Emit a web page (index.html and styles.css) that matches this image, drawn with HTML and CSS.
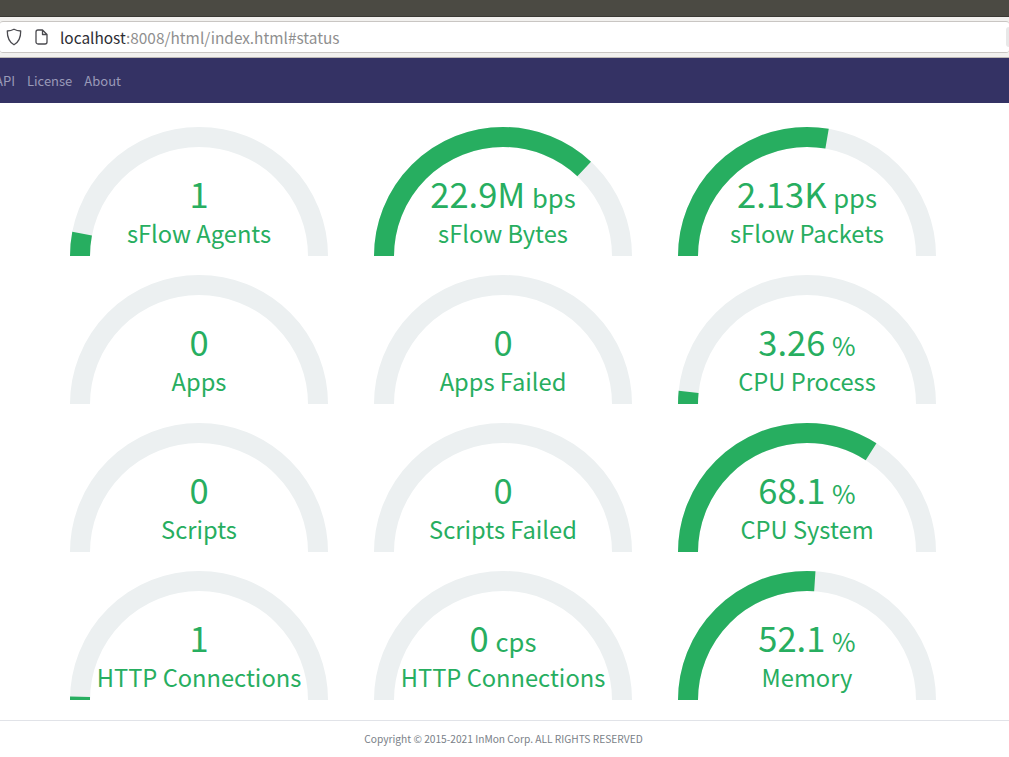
FILE: index.html
```html
<!DOCTYPE html>
<html lang="en">
<head>
    <meta charset="UTF-8">
    <title>sFlow-RT Status</title>
    <link rel="stylesheet" href="styles.css">
</head>
<body>
<div class="titlebar"></div>
<div class="toolbar">
    <div class="urlbar">
        <svg class="shield" width="16" height="18" viewBox="0 0 16 18"><path d="M8 1.2 C5.8 2.4 3.6 2.9 1.3 3 C1.2 9.5 3 14 8 16.8 C13 14 14.8 9.5 14.7 3 C12.4 2.9 10.2 2.4 8 1.2 Z" fill="none" stroke="#4a4a4f" stroke-width="1.3" stroke-linejoin="round"/></svg>
        <svg class="page-icon" width="13" height="16" viewBox="0 0 13 16"><path d="M3 1 H7.5 L12 5.5 V13 a2 2 0 0 1 -2 2 H3 a2 2 0 0 1 -2 -2 V3 a2 2 0 0 1 2 -2 Z M7.5 1 V5.5 H12" fill="none" stroke="#4a4a4f" stroke-width="1.3" stroke-linejoin="round"/></svg>
        <span class="url"><b>localhost</b>:8008/html/index.html#status</span>
        <span class="url-end"></span>
    </div>
</div>
<nav class="navbar">
    <a href="#api">API</a>
    <a href="#license">License</a>
    <a href="#about">About</a>
</nav>
<main class="gauges">
    <div class="gauge">
        <svg width="258" height="129" viewBox="0 0 258 129"><path class="track" pathLength="100" d="M10 129 A119 119 0 0 1 248 129"/><path class="fill" pathLength="100" stroke-dasharray="6 100" d="M10 129 A119 119 0 0 1 248 129"/></svg>
        <div class="readout"><div class="value">1</div><div class="label">sFlow Agents</div></div>
    </div>
    <div class="gauge">
        <svg width="258" height="129" viewBox="0 0 258 129"><path class="track" pathLength="100" d="M10 129 A119 119 0 0 1 248 129"/><path class="fill" pathLength="100" stroke-dasharray="73.9 100" d="M10 129 A119 119 0 0 1 248 129"/></svg>
        <div class="readout"><div class="value">22.9M <small>bps</small></div><div class="label">sFlow Bytes</div></div>
    </div>
    <div class="gauge">
        <svg width="258" height="129" viewBox="0 0 258 129"><path class="track" pathLength="100" d="M10 129 A119 119 0 0 1 248 129"/><path class="fill" pathLength="100" stroke-dasharray="55.4 100" d="M10 129 A119 119 0 0 1 248 129"/></svg>
        <div class="readout"><div class="value">2.13K <small>pps</small></div><div class="label">sFlow Packets</div></div>
    </div>
    <div class="gauge">
        <svg width="258" height="129" viewBox="0 0 258 129"><path class="track" pathLength="100" d="M10 129 A119 119 0 0 1 248 129"/></svg>
        <div class="readout"><div class="value">0</div><div class="label">Apps</div></div>
    </div>
    <div class="gauge">
        <svg width="258" height="129" viewBox="0 0 258 129"><path class="track" pathLength="100" d="M10 129 A119 119 0 0 1 248 129"/></svg>
        <div class="readout"><div class="value">0</div><div class="label">Apps Failed</div></div>
    </div>
    <div class="gauge">
        <svg width="258" height="129" viewBox="0 0 258 129"><path class="track" pathLength="100" d="M10 129 A119 119 0 0 1 248 129"/><path class="fill" pathLength="100" stroke-dasharray="3.26 100" d="M10 129 A119 119 0 0 1 248 129"/></svg>
        <div class="readout"><div class="value">3.26 <small>%</small></div><div class="label">CPU Process</div></div>
    </div>
    <div class="gauge">
        <svg width="258" height="129" viewBox="0 0 258 129"><path class="track" pathLength="100" d="M10 129 A119 119 0 0 1 248 129"/></svg>
        <div class="readout"><div class="value">0</div><div class="label">Scripts</div></div>
    </div>
    <div class="gauge">
        <svg width="258" height="129" viewBox="0 0 258 129"><path class="track" pathLength="100" d="M10 129 A119 119 0 0 1 248 129"/></svg>
        <div class="readout"><div class="value">0</div><div class="label">Scripts Failed</div></div>
    </div>
    <div class="gauge">
        <svg width="258" height="129" viewBox="0 0 258 129"><path class="track" pathLength="100" d="M10 129 A119 119 0 0 1 248 129"/><path class="fill" pathLength="100" stroke-dasharray="68.1 100" d="M10 129 A119 119 0 0 1 248 129"/></svg>
        <div class="readout"><div class="value">68.1 <small>%</small></div><div class="label">CPU System</div></div>
    </div>
    <div class="gauge">
        <svg width="258" height="129" viewBox="0 0 258 129"><path class="track" pathLength="100" d="M10 129 A119 119 0 0 1 248 129"/><path class="fill" pathLength="100" stroke-dasharray="0.9 100" d="M10 129 A119 119 0 0 1 248 129"/></svg>
        <div class="readout"><div class="value">1</div><div class="label">HTTP Connections</div></div>
    </div>
    <div class="gauge">
        <svg width="258" height="129" viewBox="0 0 258 129"><path class="track" pathLength="100" d="M10 129 A119 119 0 0 1 248 129"/></svg>
        <div class="readout"><div class="value">0 <small>cps</small></div><div class="label">HTTP Connections</div></div>
    </div>
    <div class="gauge">
        <svg width="258" height="129" viewBox="0 0 258 129"><path class="track" pathLength="100" d="M10 129 A119 119 0 0 1 248 129"/><path class="fill" pathLength="100" stroke-dasharray="52.1 100" d="M10 129 A119 119 0 0 1 248 129"/></svg>
        <div class="readout"><div class="value">52.1 <small>%</small></div><div class="label">Memory</div></div>
    </div>
</main>
<footer class="footer">Copyright © 2015-2021 InMon Corp. ALL RIGHTS RESERVED</footer>
</body>
</html>
```

FILE: styles.css
```css
*{
    margin: 0;
    padding: 0;
    box-sizing: border-box;
}

body{
    width: 1009px;
    height: 757px;
    overflow: hidden;
    background: #fff;
    font-family: "Noto Sans CJK SC", "Liberation Sans", sans-serif;
}

.titlebar{
    height: 17px;
    background: #4b4a43;
    border-bottom: 1px solid #3a3934;
}

.toolbar{
    height: 41px;
    padding-top: 4px;
    background: #f2f1ef;
    border-bottom: 1px solid #bdb9b6;
}
.urlbar{
    display: flex;
    align-items: center;
    height: 32px;
    background: #fff;
    border-top: 1px solid #c9c6c3;
    border-bottom: 1px solid #c9c6c3;
    border-radius: 3px;
}
.shield{
    margin-left: 6px;
}
.page-icon{
    margin-left: 13px;
}
.url{
    margin-left: 12px;
    font-size: 15.4px;
    line-height: 30px;
    color: #8f8f8f;
}
.url b{
    font-weight: 400;
    color: #2d2d33;
}
.url-end{
    margin-left: auto;
    width: 3px;
    height: 20px;
    background: #e8e8e8;
    border-radius: 3px 0 0 3px;
}

.navbar{
    display: flex;
    align-items: center;
    gap: 12px;
    height: 45px;
    margin-left: -5px;
    background: #343264;
    font-size: 13px;
}
.navbar a{
    color: #9a9ab8;
    text-decoration: none;
}

.gauges{
    display: grid;
    grid-template-columns: repeat(3, 304px);
    grid-auto-rows: 148px;
    margin-left: 47px;
    padding-top: 24px;
}
.gauge{
    position: relative;
    justify-self: center;
    width: 258px;
    height: 129px;
}
.gauge svg{
    display: block;
}
.track,.fill{
    fill: none;
    stroke-width: 20;
}
.track{
    stroke: #ecf0f1;
}
.fill{
    stroke: #27ae60;
}
.readout{
    position: absolute;
    left: 0;
    right: 0;
    top: 45px;
    text-align: center;
    color: #27ae60;
    white-space: nowrap;
}
.value{
    font-size: 34.5px;
    line-height: 42px;
    height: 42px;
    word-spacing: -1px;
}
.value small{
    font-size: 25.6px;
    line-height: 0;
}
.label{
    font-size: 23.7px;
    line-height: 39px;
}

.footer{
    margin-top: 1px;
    height: 37px;
    padding-right: 2px;
    border-top: 1px solid #e1e3e8;
    font-size: 10.2px;
    line-height: 36px;
    text-align: center;
    color: #7a7f88;
}
```
